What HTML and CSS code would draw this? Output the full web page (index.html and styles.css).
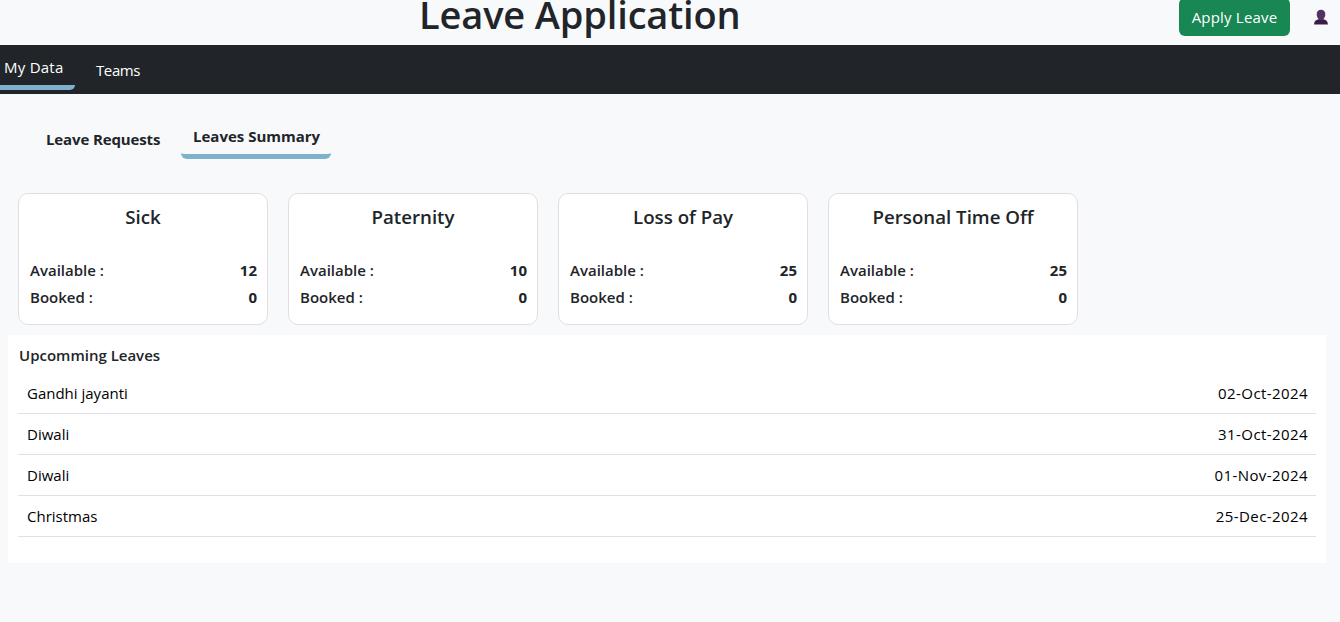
FILE: index.html
```html
<!DOCTYPE html>
<html lang="en">
<head>
<meta charset="utf-8">
<title>Leave Application</title>
<link rel="stylesheet" href="styles.css">
</head>
<body>
<header class="header">
  <h1 class="title">Leave Application</h1>
  <div class="actions">
    <button class="apply">Apply Leave</button>
    <svg class="user" width="14" height="16" viewBox="0 0 14 16"><path fill="#553264" d="M7 0.8C4.4 0.8 2.700 2.400 2.700 5.200C2.700 7.200 3.500 9 4.600 10V12H9.400V10C10.500 9 11.300 7.200 11.300 5.200C11.300 2.400 9.600 0.800 7 0.800Z"/><path fill="#3a1e47" d="M4.600 10.300C2.500 11 0.300 11.500 0.100 15.500H13.900C13.700 11.500 11.500 11 9.400 10.300C8.500 11.500 5.500 11.500 4.600 10.300Z"/></svg>
  </div>
</header>
<nav class="nav">
  <a class="nav-tab active">My Data</a>
  <a class="nav-tab teams">Teams</a>
</nav>
<main class="main">
  <div class="subtabs">
    <a class="subtab requests">Leave Requests</a>
    <a class="subtab summary active">Leaves Summary</a>
  </div>
  <section class="cards">
    <article class="card">
      <h2 class="card-title">Sick</h2>
      <div class="row"><span class="label">Available :</span><b class="value">12</b></div>
      <div class="row"><span class="label">Booked :</span><b class="value">0</b></div>
    </article>
    <article class="card">
      <h2 class="card-title">Paternity</h2>
      <div class="row"><span class="label">Available :</span><b class="value">10</b></div>
      <div class="row"><span class="label">Booked :</span><b class="value">0</b></div>
    </article>
    <article class="card">
      <h2 class="card-title">Loss of Pay</h2>
      <div class="row"><span class="label">Available :</span><b class="value">25</b></div>
      <div class="row"><span class="label">Booked :</span><b class="value">0</b></div>
    </article>
    <article class="card">
      <h2 class="card-title">Personal Time Off</h2>
      <div class="row"><span class="label">Available :</span><b class="value">25</b></div>
      <div class="row"><span class="label">Booked :</span><b class="value">0</b></div>
    </article>
  </section>
  <section class="upcoming">
    <h3 class="upcoming-title">Upcomming Leaves</h3>
    <div class="leave"><span>Gandhi jayanti</span><span class="date">02-Oct-2024</span></div>
    <div class="leave"><span>Diwali</span><span class="date">31-Oct-2024</span></div>
    <div class="leave"><span>Diwali</span><span class="date">01-Nov-2024</span></div>
    <div class="leave"><span>Christmas</span><span class="date">25-Dec-2024</span></div>
  </section>
</main>
</body>
</html>
```
FILE: styles.css
```css
* { box-sizing: border-box; }
body {
  margin: 0;
  height: 622px;
  overflow: hidden;
  background: #f8f9fb;
  color: #212529;
  font-family: "Segoe UI", "Open Sans", "Noto Sans", sans-serif;
  font-size: 15px;
  line-height: 24px;
}
h1, h2, h3 { margin: 0; }
.header {
  display: flex;
  justify-content: space-between;
  height: 45px;
  padding-left: 419px;
}
.title {
  margin-top: -10px;
  font-size: 38px;
  font-weight: 600;
  line-height: 48px;
  letter-spacing: -0.15px;
  white-space: nowrap;
}
.actions { display: flex; align-items: flex-start; padding-right: 12px; }
.apply {
  width: 111px;
  height: 38px;
  margin-top: -2px;
  padding: 0;
  border: 0;
  border-radius: 6px;
  background: #198754;
  color: #fff;
  font: inherit;
  letter-spacing: 0.2px;
}
.user { margin: 9px 0 0 24px; }
.nav {
  display: flex;
  align-items: flex-start;
  height: 49px;
  background: #212529;
  color: #fff;
}
.nav-tab { padding: 13px 12px 0; margin-left: 10px; white-space: nowrap; }
.nav-tab.teams { padding-left: 11px; letter-spacing: -0.4px; }
.nav-tab.active {
  width: 83px;
  height: 45px;
  margin-left: -8px;
  padding-top: 10px;
  border-bottom: 5px solid #7eb1cb;
  border-radius: 5px;
  letter-spacing: 0.25px;
}
.main { padding: 24px 14px 0 8px; }
.subtabs { display: flex; height: 65px; padding-left: 38px; font-weight: 700; }
.subtab { padding-top: 9px; white-space: nowrap; }
.requests { width: 135px; letter-spacing: -0.13px; }
.subtab.active {
  width: 150px;
  height: 41px;
  padding: 6px 0 0 12px;
  border-bottom: 5px solid #7eb1cb;
  border-radius: 6px;
}
.cards { display: flex; gap: 20px; padding: 10px; }
.card {
  width: 250px;
  height: 132px;
  padding: 11px 10px;
  border: 1px solid #e3dde1;
  border-radius: 10px;
  background: #fff;
}
.card-title { margin-bottom: 29px; font-size: 18.7px; font-weight: 600; line-height: 24px; text-align: center; }
.row { display: flex; justify-content: space-between; height: 27px; padding-left: 1px; }
.label { font-weight: 600; }
.value { font-weight: 700; }
.upcoming { height: 228px; padding: 8px 10px; background: #fff; }
.upcoming-title { height: 30px; padding-left: 1px; font-size: 15px; font-weight: 600; line-height: 24px; }
.leave {
  display: flex;
  justify-content: space-between;
  height: 41px;
  padding: 8px 8px 8px 9px;
  border-bottom: 1px solid #dee2e6;
  color: #000;
}
.date { letter-spacing: 0.42px; }
```
